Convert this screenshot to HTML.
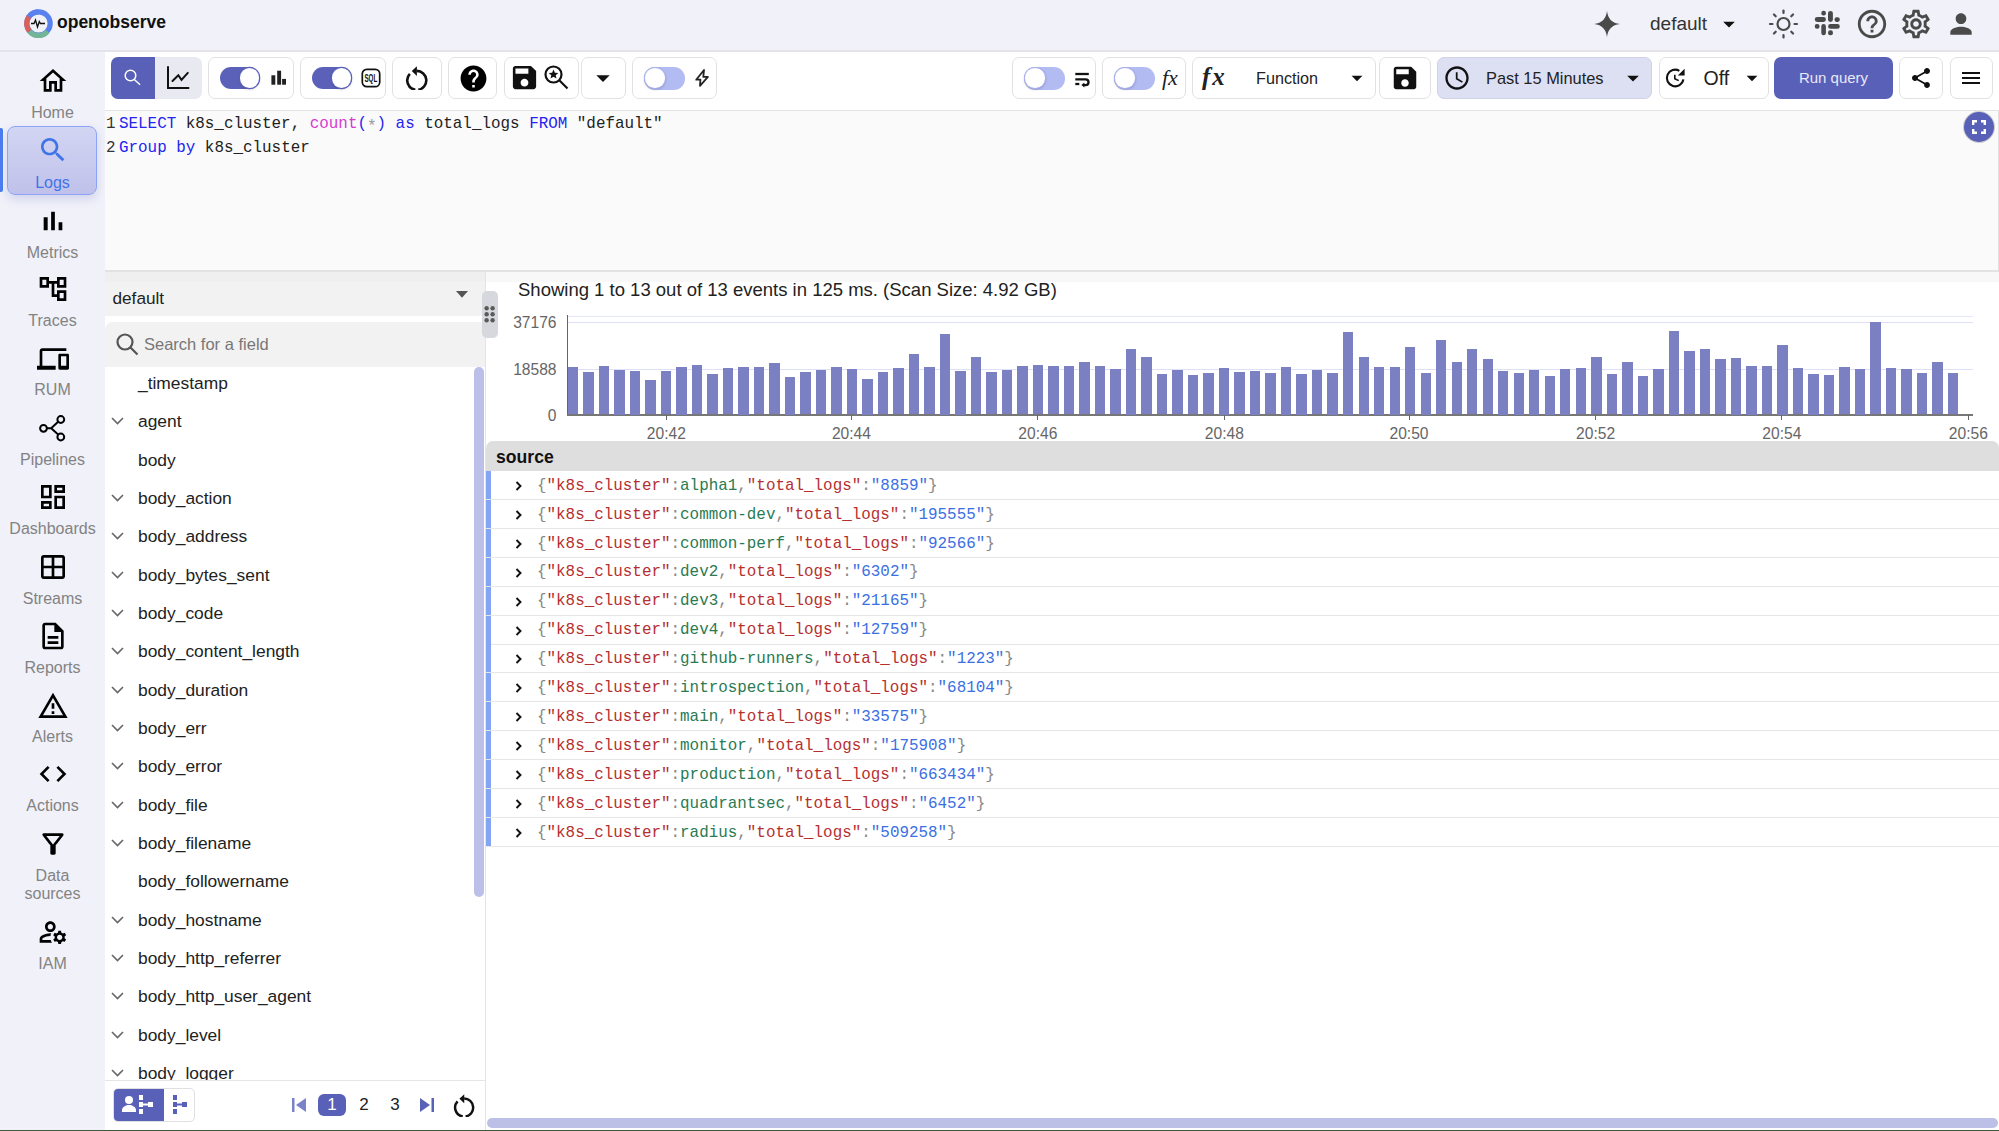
<!DOCTYPE html>
<html><head><meta charset="utf-8">
<style>
*{box-sizing:border-box;margin:0;padding:0}
html,body{width:1999px;height:1131px;overflow:hidden;background:#fff;font-family:"Liberation Sans",sans-serif;color:#222}
.a{position:absolute}
.nav{position:absolute;left:0;width:105px;text-align:center;font-size:16px;line-height:18px;color:#777}
.btn{position:absolute;top:57px;height:42px;border:1px solid #e2e2e2;border-radius:7px;background:#fff}
.mono{font-family:"Liberation Mono",monospace}
.fld{position:absolute;left:138px;font-size:17.4px;line-height:20px;color:#222;white-space:nowrap}
.row{position:absolute;left:486px;width:1513px;height:29px;border-bottom:1px solid #e6e6e6}
.bl{position:absolute;left:0;top:0;width:5px;height:28px;background:#84a4f4}
.rt{position:absolute;left:51px;top:4.8px;font-size:15.9px;line-height:20px;white-space:pre;color:#888}
.k{color:#b62f2f}.v{color:#2a7a52}.n{color:#3b6fe3}
.tick{position:absolute;top:415px;width:1px;height:5px;background:#666}
.xl{position:absolute;top:425px;font-size:15.6px;letter-spacing:0px;color:#666;width:60px;text-align:center;line-height:17px}
</style></head>
<body>

<div class="a" style="left:0;top:0;width:1999px;height:51px;background:#f0f1f9"></div>
<div class="a" style="left:0;top:51px;width:105px;height:1080px;background:#f0f1f9"></div>
<svg class="a" style="left:24px;top:9px" width="29" height="29" viewBox="0 0 29 29">
<circle cx="14.5" cy="14.5" r="11.7" fill="none" stroke="#5a82ee" stroke-width="5.2"/>
<path d="M14.5 2.8 A11.7 11.7 0 0 0 4.6 8.2" fill="none" stroke="#5a82ee" stroke-width="5.2"/>
<path d="M4.9 7.8 A11.7 11.7 0 0 0 5.5 22.3" fill="none" stroke="#d9605c" stroke-width="5.2"/>
<path d="M5.5 22.3 A11.7 11.7 0 0 0 23.5 22.3" fill="none" stroke="#73b596" stroke-width="5.2"/>
<path d="M7 14.5h3l1.5-3.5 2 7 1.8-5.5 1.2 2h4.5" fill="none" stroke="#111" stroke-width="1.3"/>
</svg>
<div class="a" style="left:57px;top:12px;font-size:17.5px;font-weight:bold;color:#111;letter-spacing:0px;line-height:20px">openobserve</div>
<svg class="a" style="left:1594px;top:11px" width="26" height="26" viewBox="0 0 26 26"><path fill="#4a4a4a" d="M13 0 C14 8 18 12 26 13 C18 14 14 18 13 26 C12 18 8 14 0 13 C8 12 12 8 13 0Z"/></svg>
<div class="a" style="left:1650px;top:14px;font-size:19px;color:#333;line-height:20px">default</div>
<svg class="a" style="left:1715px;top:10px" width="28" height="28" viewBox="0 0 24 24" ><path fill="#111" d="M7 10l5 5 5-5z"/></svg>
<svg class="a" style="left:1768px;top:9px" width="31" height="31" viewBox="0 0 31 31"><g stroke="#4a4a4a" stroke-width="2.2" fill="none" stroke-linecap="round"><circle cx="15.5" cy="15" r="6"/><line x1="26.50" y1="15.00" x2="29.00" y2="15.00"/><line x1="23.28" y1="22.78" x2="25.05" y2="24.55"/><line x1="15.50" y1="26.00" x2="15.50" y2="28.50"/><line x1="7.72" y1="22.78" x2="5.95" y2="24.55"/><line x1="4.50" y1="15.00" x2="2.00" y2="15.00"/><line x1="7.72" y1="7.22" x2="5.95" y2="5.45"/><line x1="15.50" y1="4.00" x2="15.50" y2="1.50"/><line x1="23.28" y1="7.22" x2="25.05" y2="5.45"/></g></svg>
<svg class="a" style="left:1810px;top:6px" width="36" height="36" viewBox="0 0 36 36"><g fill="#4a4a4a">
<rect x="11.3" y="4.8" width="4.6" height="4.7" rx="2.1"/><rect x="18" y="4.9" width="4.9" height="11" rx="2.45"/>
<rect x="4.8" y="11.1" width="11.1" height="4.8" rx="2.4"/><rect x="24.5" y="11.3" width="5.3" height="4.6" rx="2.1"/>
<rect x="4.8" y="18" width="4.7" height="4.8" rx="2.1"/><rect x="11.3" y="18.1" width="4.6" height="11.2" rx="2.3"/>
<rect x="18.1" y="18.1" width="11.7" height="4.7" rx="2.35"/><rect x="18.1" y="24.3" width="4.8" height="5" rx="2.1"/>
</g></svg>
<svg class="a" style="left:1855px;top:7px" width="34" height="34" viewBox="0 0 24 24" ><path fill="#4a4a4a" d="M11 18h2v-2h-2v2zm1-16C6.48 2 2 6.48 2 12s4.48 10 10 10 10-4.48 10-10S17.52 2 12 2zm0 18c-4.41 0-8-3.59-8-8s3.59-8 8-8 8 3.59 8 8-3.59 8-8 8zm0-14c-2.21 0-4 1.79-4 4h2c0-1.1.9-2 2-2s2 .9 2 2c0 2-3 1.75-3 5h2c0-2.25 3-2.5 3-5 0-2.21-1.79-4-4-4z"/></svg>
<svg class="a" style="left:1899px;top:7px" width="34" height="34" viewBox="0 0 24 24" ><path fill="#4a4a4a" d="M19.43 12.98c.04-.32.07-.64.07-.98 0-.34-.03-.66-.07-.98l2.11-1.65c.19-.15.24-.42.12-.64l-2-3.46c-.09-.16-.26-.25-.44-.25-.06 0-.12.01-.17.03l-2.49 1c-.52-.4-1.08-.73-1.69-.98l-.38-2.65C14.46 2.18 14.25 2 14 2h-4c-.25 0-.46.18-.49.42l-.38 2.65c-.61.25-1.17.59-1.69.98l-2.49-1c-.06-.02-.12-.03-.18-.03-.17 0-.34.09-.43.25l-2 3.46c-.13.22-.07.49.12.64l2.11 1.65c-.04.32-.07.65-.07.98 0 .33.03.66.07.98l-2.11 1.65c-.19.15-.24.42-.12.64l2 3.46c.09.16.26.25.44.25.06 0 .12-.01.17-.03l2.49-1c.52.4 1.08.73 1.69.98l.38 2.65c.03.24.24.42.49.42h4c.25 0 .46-.18.49-.42l.38-2.65c.61-.25 1.17-.59 1.69-.98l2.49 1c.06.02.12.03.18.03.17 0 .34-.09.43-.25l2-3.46c.12-.22.07-.49-.12-.64l-2.11-1.65zm-1.98-1.71c.04.31.05.52.05.73 0 .21-.02.43-.05.73l-.14 1.13.89.7 1.08.84-.7 1.21-1.27-.51-1.04-.42-.9.68c-.43.32-.84.56-1.25.73l-1.06.43-.16 1.13-.2 1.35h-1.4l-.19-1.35-.16-1.13-1.06-.43c-.43-.18-.83-.41-1.23-.71l-.91-.7-1.06.43-1.27.51-.7-1.21 1.08-.84.89-.7-.14-1.13c-.03-.31-.05-.54-.05-.74s.02-.43.05-.73l.14-1.13-.89-.7-1.08-.84.7-1.21 1.27.51 1.04.42.9-.68c.43-.32.84-.56 1.25-.73l1.06-.43.16-1.13.2-1.35h1.39l.19 1.35.16 1.13 1.06.43c.43.18.83.41 1.23.71l.91.7 1.06-.43 1.27-.51.7 1.21-1.07.85-.89.7.14 1.13zM12 8c-2.21 0-4 1.79-4 4s1.79 4 4 4 4-1.79 4-4-1.79-4-4-4zm0 6c-1.1 0-2-.9-2-2s.9-2 2-2 2 .9 2 2-.9 2-2 2z"/></svg>
<svg class="a" style="left:1945px;top:8px" width="32" height="32" viewBox="0 0 24 24" ><path fill="#4a4a4a" d="M12 12c2.21 0 4-1.79 4-4s-1.79-4-4-4-4 1.79-4 4 1.79 4 4 4zm0 2c-2.67 0-8 1.34-8 4v2h16v-2c0-2.66-5.33-4-8-4z"/></svg>
<div class="a" style="left:7px;top:126px;width:90px;height:69px;border-radius:8px;background:linear-gradient(#d3d5f3,#bfc1ea);border:1px solid #8aa5f5;box-shadow:0 4px 10px rgba(120,120,200,0.25)"></div>
<div class="a" style="left:0;top:128px;width:3px;height:64px;background:#4a7cf0;border-radius:0 2px 2px 0"></div>
<svg class="a" style="left:36.5px;top:65px" width="32" height="32" viewBox="0 0 24 24" ><path fill="#000" d="M12 5.69l5 4.5V18h-2v-6H9v6H7v-7.81l5-4.5M12 3L2 12h3v8h6v-6h2v6h6v-8h3L12 3z"/></svg>
<div class="nav" style="top:103.5px;color:#838383">Home</div>
<svg class="a" style="left:36.5px;top:134px" width="32" height="32" viewBox="0 0 24 24" ><path fill="#3f74e8" d="M15.5 14h-.79l-.28-.27C15.41 12.59 16 11.11 16 9.5 16 5.91 13.09 3 9.5 3S3 5.91 3 9.5 5.91 16 9.5 16c1.61 0 3.09-.59 4.23-1.57l.27.28v.79l5 4.99L20.49 19l-4.99-5zm-6 0C7.01 14 5 11.99 5 9.5S7.01 5 9.5 5 14 7.01 14 9.5 11.99 14 9.5 14z"/></svg>
<div class="nav" style="top:173.5px;color:#3f74e8">Logs</div>
<svg class="a" style="left:36.5px;top:205px" width="32" height="32" viewBox="0 0 24 24" ><path fill="#000" d="M5 9.2h3V19H5zM10.6 5h2.8v14h-2.8zm5.6 8H19v6h-2.8z"/></svg>
<div class="nav" style="top:243.5px;color:#838383">Metrics</div>
<svg class="a" style="left:36.5px;top:273px" width="32" height="32" viewBox="0 0 24 24" ><path fill="#000" d="M22 11V3h-7v3H9V3H2v8h7V8h2v10h4v3h7v-8h-7v3h-2V8h2v3h7zM7 9H4V5h3v4zm10 6h3v4h-3v-4zm0-10h3v4h-3V5z"/></svg>
<div class="nav" style="top:311.5px;color:#838383">Traces</div>
<svg class="a" style="left:36.5px;top:343px" width="32" height="32" viewBox="0 0 24 24" ><path fill="#000" d="M4 6h18V4H4c-1.1 0-2 .9-2 2v11H0v3h14v-3H4V6zm19 2h-6c-.55 0-1 .45-1 1v10c0 .55.45 1 1 1h6c.55 0 1-.45 1-1V9c0-.55-.45-1-1-1zm-1 9h-4v-7h4v7z"/></svg>
<div class="nav" style="top:380.5px;color:#838383">RUM</div>
<svg class="a" style="left:37px;top:412px" width="32" height="32" viewBox="0 0 32 32"><g stroke="#000" stroke-width="2" fill="none"><circle cx="6.5" cy="16.3" r="3.4"/><circle cx="23.8" cy="7.5" r="3.4"/><circle cx="23.8" cy="25" r="3.4"/><path d="M9.9 16.3H14.2L21.4 9.6M14.2 16.3L21.4 22.7"/></g></svg>
<div class="nav" style="top:450.5px;color:#838383">Pipelines</div>
<svg class="a" style="left:36.5px;top:481px" width="32" height="32" viewBox="0 0 24 24" ><path fill="#000" d="M19 5v2h-4V5h4M9 5v6H5V5h4m10 8v6h-4v-6h4M9 17v2H5v-2h4M21 3h-8v6h8V3zM11 3H3v10h8V3zm10 8h-8v10h8V11zm-10 4H3v6h8v-6z"/></svg>
<div class="nav" style="top:519.5px;color:#838383">Dashboards</div>
<svg class="a" style="left:36.5px;top:551px" width="32" height="32" viewBox="0 0 24 24" ><path fill="#000" d="M19 3H5c-1.1 0-2 .9-2 2v14c0 1.1.9 2 2 2h14c1.1 0 2-.9 2-2V5c0-1.1-.9-2-2-2zm0 2v6h-6V5h6zm-8 0v6H5V5h6zm-6 14v-6h6v6H5zm8 0v-6h6v6h-6z"/></svg>
<div class="nav" style="top:589.5px;color:#838383">Streams</div>
<svg class="a" style="left:36.5px;top:620px" width="32" height="32" viewBox="0 0 24 24" ><path fill="#000" d="M8 16h8v2H8zm0-4h8v2H8zm6-10H6c-1.1 0-2 .9-2 2v16c0 1.1.89 2 1.99 2H18c1.1 0 2-.9 2-2V8l-6-6zm4 18H6V4h7v5h5v11z"/></svg>
<div class="nav" style="top:658.5px;color:#838383">Reports</div>
<svg class="a" style="left:36.5px;top:690px" width="32" height="32" viewBox="0 0 24 24" ><path fill="#000" d="M12 5.99L19.53 19H4.47L12 5.99M12 2L1 21h22L12 2zm1 14h-2v2h2v-2zm0-6h-2v4h2v-4z"/></svg>
<div class="nav" style="top:727.5px;color:#838383">Alerts</div>
<svg class="a" style="left:36.5px;top:758px" width="32" height="32" viewBox="0 0 24 24" ><path fill="#000" d="M9.4 16.6L4.8 12l4.6-4.6L8 6l-6 6 6 6 1.4-1.4zm5.2 0l4.6-4.6-4.6-4.6L16 6l6 6-6 6-1.4-1.4z"/></svg>
<div class="nav" style="top:796.5px;color:#838383">Actions</div>
<svg class="a" style="left:36.5px;top:828px" width="32" height="32" viewBox="0 0 24 24" ><path fill="#000" d="M7 6h10l-5.01 6.3L7 6zm-2.75-.39C6.27 8.2 10 13 10 13v6c0 .55.45 1 1 1h2c.55 0 1-.45 1-1v-6s3.72-4.8 5.74-7.39c.51-.66.04-1.61-.79-1.61H5.04c-.83 0-1.3.95-.79 1.61z"/></svg>
<div class="nav" style="top:866.5px;color:#838383">Data<br>sources</div>
<svg class="a" style="left:36.5px;top:916px" width="32" height="32" viewBox="0 0 24 24" ><path fill="#000" d="M4 18v-.65c0-.34.16-.66.41-.81C6.1 15.53 8.03 15 10 15c.03 0 .05 0 .08.01.1-.7.3-1.37.59-1.98-.22-.02-.44-.03-.67-.03-2.42 0-4.68.67-6.61 1.82-.88.52-1.39 1.5-1.39 2.53V20h9.26c-.42-.6-.75-1.28-.97-2H4zM10 12c2.21 0 4-1.79 4-4s-1.79-4-4-4-4 1.79-4 4 1.79 4 4 4zm0-6c1.1 0 2 .9 2 2s-.9 2-2 2-2-.9-2-2 .9-2 2-2zm10.75 10c0-.22-.03-.42-.06-.63l1.14-1.01-1-1.73-1.45.49c-.32-.27-.68-.48-1.08-.63L18 11h-2l-.3 1.49c-.4.15-.76.36-1.08.63l-1.45-.49-1 1.73 1.14 1.01c-.03.21-.06.41-.06.63s.03.42.06.63l-1.14 1.01 1 1.73 1.45-.49c.32.27.68.48 1.08.63L16 21h2l.3-1.49c.4-.15.76-.36 1.08-.63l1.45.49 1-1.73-1.14-1.01c.03-.21.06-.41.06-.63zM17 18c-1.1 0-2-.9-2-2s.9-2 2-2 2 .9 2 2-.9 2-2 2z"/></svg>
<div class="nav" style="top:954.5px;color:#838383">IAM</div>
<div class="a" style="left:105px;top:52px;width:1894px;height:59px;background:#fff;border-bottom:1px solid #e4e4e4"></div>
<div class="a" style="left:0;top:50px;width:1999px;height:2px;background:#e3e3e8"></div>
<div class="a" style="left:111px;top:57px;width:91px;height:42px;border-radius:7px;background:#e9e9f2;overflow:hidden"><div class="a" style="left:0;top:0;width:44px;height:42px;background:#5960b8"></div></div>
<svg class="a" style="left:120px;top:65px" width="26" height="26" viewBox="0 0 26 26"><g fill="none" stroke="#fff" stroke-width="1.5"><circle cx="10.5" cy="10.5" r="5.3"/><path d="M14.3 14.5l5.8 5.3"/></g></svg>
<svg class="a" style="left:165px;top:65px" width="26" height="26" viewBox="0 0 26 26"><g fill="none" stroke="#111" stroke-width="2" stroke-linecap="round"><path d="M3 2v21h20.5"/><path d="M7.5 16l5.8-5.8 3.2 4.7 6.3-7"/></g></svg>
<div class="btn" style="left:208px;width:86px"></div>
<div class="a" style="left:220px;top:67px;width:40px;height:22px;border-radius:11px;background:#5b61b9"></div><div class="a" style="left:239.5px;top:68.2px;width:19.6px;height:19.6px;border-radius:50%;background:#fff;box-shadow:0 0 0 1.2px #5b61b9,0 1px 3px rgba(0,0,0,.3)"></div>
<svg class="a" style="left:271px;top:70px" width="16" height="15" viewBox="0 0 16 15"><g fill="#222"><rect x="0.4" y="5.3" width="3.9" height="9.4"/><rect x="6.2" y="0.7" width="3.9" height="14"/><rect x="11.1" y="8.9" width="3.9" height="5.8"/></g></svg>
<div class="btn" style="left:300px;width:86px"></div>
<div class="a" style="left:312px;top:67px;width:40px;height:22px;border-radius:11px;background:#5b61b9"></div><div class="a" style="left:331.5px;top:68.2px;width:19.6px;height:19.6px;border-radius:50%;background:#fff;box-shadow:0 0 0 1.2px #5b61b9,0 1px 3px rgba(0,0,0,.3)"></div>
<svg class="a" style="left:361px;top:68px" width="20" height="20" viewBox="0 0 20 20"><rect x="1.3" y="1.3" width="17.4" height="17.4" rx="4.5" fill="none" stroke="#111" stroke-width="1.7"/><text x="3.4" y="14.2" font-family="Liberation Sans" font-weight="bold" font-size="10" textLength="12.8" lengthAdjust="spacingAndGlyphs" fill="#111">SQL</text></svg>
<div class="btn" style="left:392px;width:50px"></div>
<svg class="a" style="left:404px;top:64px" width="26.0" height="26.0" viewBox="0 0 26 26"><g fill="none" stroke="#111" stroke-width="2.6"><path d="M14.29 25.78A9.5 9.5 0 0 0 12.8 6.9"/><path d="M11.31 25.78A9.5 9.5 0 0 1 5.85 9.92"/></g><path d="M7.8 7.1L12.9 2.3V11.9Z" fill="#111"/></svg>
<div class="btn" style="left:448px;width:49px"></div>
<svg class="a" style="left:457.5px;top:63px" width="31" height="31" viewBox="0 0 24 24" ><path fill="#000" d="M12 2C6.48 2 2 6.48 2 12s4.48 10 10 10 10-4.48 10-10S17.52 2 12 2zm1 17h-2v-2h2v2zm2.07-7.75l-.9.92C13.45 12.9 13 13.5 13 15h-2v-.5c0-1.1.45-2.1 1.17-2.83l1.24-1.26c.37-.36.59-.86.59-1.41 0-1.1-.9-2-2-2s-2 .9-2 2H8c0-2.21 1.79-4 4-4s4 1.79 4 4c0 .88-.36 1.68-.93 2.25z"/></svg>
<div class="btn" style="left:504px;width:75px"></div>
<svg class="a" style="left:509px;top:62px" width="31" height="31" viewBox="0 0 24 24" ><path fill="#111" d="M17 3H5c-1.11 0-2 .9-2 2v14c0 1.1.89 2 2 2h14c1.1 0 2-.9 2-2V7l-4-4zm-5 16c-1.66 0-3-1.34-3-3s1.34-3 3-3 3 1.34 3 3-1.34 3-3 3zm3-10H5V5h10v4z"/></svg>
<svg class="a" style="left:543px;top:64px" width="27" height="27" viewBox="0 0 27 27"><g fill="none" stroke="#111" stroke-width="2.2"><circle cx="10.5" cy="10.5" r="8"/><path d="M16.5 16.5l8 8"/></g><path fill="#111" d="M10.5 5.5l1.4 3.2 3.4.3-2.6 2.2.8 3.3-3-1.8-3 1.8.8-3.3-2.6-2.2 3.4-.3z"/></svg>
<div class="btn" style="left:581px;width:45px"></div>
<svg class="a" style="left:587px;top:62px" width="32" height="32" viewBox="0 0 24 24" ><path fill="#111" d="M7 10l5 5 5-5z"/></svg>
<div class="btn" style="left:632px;width:85px"></div>
<div class="a" style="left:644px;top:67px;width:40.5px;height:22.5px;border-radius:11.25px;background:#b3bbf3"></div><div class="a" style="left:645.2px;top:68.4px;width:19.6px;height:19.6px;border-radius:50%;background:#fff;box-shadow:0 0 0 1px #a9b0ec,0 1px 3px rgba(0,0,0,.35)"></div>
<svg class="a" style="left:692px;top:66px" width="20" height="24" viewBox="0 0 20 24"><path d="M12 4 L11.3 10.9 H15.9 L8 19.8 L8.4 13.7 H4.2 Z" fill="none" stroke="#222" stroke-width="1.8" stroke-linejoin="round"/></svg>
<div class="btn" style="left:1012px;width:84px"></div>
<div class="a" style="left:1024px;top:67px;width:40.5px;height:22.5px;border-radius:11.25px;background:#b3bbf3"></div><div class="a" style="left:1025.2px;top:68.4px;width:19.6px;height:19.6px;border-radius:50%;background:#fff;box-shadow:0 0 0 1px #a9b0ec,0 1px 3px rgba(0,0,0,.35)"></div>
<svg class="a" style="left:1072px;top:68px" width="20" height="20" viewBox="0 0 20 20"><g fill="none" stroke="#111" stroke-width="2.3"><path d="M3.3 6H16.8"/><path d="M3.3 11.3H13.6a2.9 2.9 0 0 1 0 5.8H11.8"/><path d="M3.3 16H7.3"/></g><path fill="#111" d="M12.4 14.6V19.6L9.3 17.1Z"/></svg>
<div class="btn" style="left:1102px;width:84px"></div>
<div class="a" style="left:1114px;top:67px;width:40.5px;height:22.5px;border-radius:11.25px;background:#b3bbf3"></div><div class="a" style="left:1115.2px;top:68.4px;width:19.6px;height:19.6px;border-radius:50%;background:#fff;box-shadow:0 0 0 1px #a9b0ec,0 1px 3px rgba(0,0,0,.35)"></div>
<div class="a" style="left:1162px;top:63px;font-family:'Liberation Serif',serif;font-style:italic;font-size:22px;color:#222;line-height:30px">fx</div>
<div class="btn" style="left:1192px;width:184px"></div>
<div class="a" style="left:1202px;top:60px;font-family:'Liberation Serif',serif;font-style:italic;font-weight:bold;font-size:25px;letter-spacing:2px;color:#222;line-height:34px">fx</div>
<div class="a" style="left:1256px;top:68px;font-size:16.2px;color:#222;line-height:20px">Function</div>
<svg class="a" style="left:1344px;top:65px" width="26" height="26" viewBox="0 0 24 24" ><path fill="#111" d="M7 10l5 5 5-5z"/></svg>
<div class="btn" style="left:1379px;width:52px"></div>
<svg class="a" style="left:1390px;top:63px" width="30" height="30" viewBox="0 0 24 24" ><path fill="#111" d="M17 3H5c-1.11 0-2 .9-2 2v14c0 1.1.89 2 2 2h14c1.1 0 2-.9 2-2V7l-4-4zm-5 16c-1.66 0-3-1.34-3-3s1.34-3 3-3 3 1.34 3 3-1.34 3-3 3zm3-10H5V5h10v4z"/></svg>
<div class="a" style="left:1437px;top:57px;width:215px;height:42px;border-radius:7px;background:#dddff2;border:1px solid #d0d2e6"></div>
<svg class="a" style="left:1443px;top:64px" width="28" height="28" viewBox="0 0 24 24" ><path fill="#111" d="M11.99 2C6.47 2 2 6.48 2 12s4.47 10 9.99 10C17.52 22 22 17.52 22 12S17.52 2 11.99 2zM12 20c-4.42 0-8-3.58-8-8s3.58-8 8-8 8 3.58 8 8-3.58 8-8 8zm.5-13H11v6l5.25 3.15.75-1.23-4.5-2.67z"/></svg>
<div class="a" style="left:1486px;top:68px;font-size:16.4px;color:#222;line-height:20px">Past 15 Minutes</div>
<svg class="a" style="left:1619px;top:64px" width="28" height="28" viewBox="0 0 24 24" ><path fill="#111" d="M7 10l5 5 5-5z"/></svg>
<div class="btn" style="left:1659px;width:110px"></div>
<svg class="a" style="left:1664px;top:67px" width="24" height="24" viewBox="0 0 24 24"><g fill="none" stroke="#111"><path d="M19.37 12.44A8.3 8.3 0 1 1 15.35 3.81" stroke-width="2.1"/><path d="M10.8 7.8V11.7L14.7 13.6" stroke-width="1.6"/></g><path d="M20.6 1.8V8.6H13.8Z" fill="#111"/></svg>
<div class="a" style="left:1703.5px;top:67.5px;font-size:19.5px;color:#222;line-height:20px">Off</div>
<svg class="a" style="left:1739px;top:65px" width="26" height="26" viewBox="0 0 24 24" ><path fill="#111" d="M7 10l5 5 5-5z"/></svg>
<div class="a" style="left:1774px;top:57px;width:119px;height:42px;border-radius:7px;background:#5960b8"></div>
<div class="a" style="left:1774px;top:68px;width:119px;text-align:center;font-size:15px;color:#e8e8f8;line-height:20px">Run query</div>
<div class="btn" style="left:1899px;width:44px"></div>
<svg class="a" style="left:1909px;top:66.2px" width="24" height="24" viewBox="0 0 24 24" ><path fill="#111" d="M18 16.08c-.76 0-1.44.3-1.96.77L8.91 12.7c.05-.23.09-.46.09-.7s-.04-.47-.09-.7l7.05-4.11c.54.5 1.25.81 2.04.81 1.66 0 3-1.34 3-3s-1.34-3-3-3-3 1.34-3 3c0 .24.04.47.09.7L8.04 9.81C7.5 9.31 6.79 9 6 9c-1.66 0-3 1.34-3 3s1.34 3 3 3c.79 0 1.5-.31 2.04-.81l7.12 4.16c-.05.21-.08.43-.08.65 0 1.61 1.31 2.92 2.92 2.92 1.61 0 2.92-1.31 2.92-2.92s-1.31-2.92-2.92-2.92z"/></svg>
<div class="btn" style="left:1950px;width:43px"></div>
<svg class="a" style="left:1959.4px;top:66.2px" width="24" height="24" viewBox="0 0 24 24" ><path fill="#111" d="M3 18h18v-2H3v2zm0-5h18v-2H3v2zm0-7v2h18V6H3z"/></svg>
<div class="a" style="left:105px;top:111px;width:1894px;height:159px;background:#fafafa"></div>
<div class="a mono" style="left:106px;top:113px;font-size:15.9px;line-height:23.5px;white-space:pre;color:#333">1
2</div>
<div class="a mono" style="left:119px;top:113px;font-size:15.9px;line-height:23.5px;white-space:pre;color:#222"><span style="color:#2424f0">SELECT</span> k8s_cluster, <span style="color:#d53bd0">count</span><span style="color:#2424f0">(</span><span style="color:#999;position:relative;top:3px">*</span><span style="color:#2424f0">)</span> <span style="color:#2424f0">as</span> total_logs <span style="color:#2424f0">FROM</span> "default"
<span style="color:#2424f0">Group</span> <span style="color:#2424f0">by</span> k8s_cluster</div>
<div class="a" style="left:1998px;top:111px;width:1px;height:159px;background:#e0e0e0"></div>
<div class="a" style="left:1964px;top:111.7px;width:30px;height:30px;border-radius:50%;background:#5960b8;box-shadow:0 0 0 1px rgba(120,120,120,0.35)"></div>
<svg class="a" style="left:1972px;top:120px" width="14" height="14" viewBox="0 0 14 14"><g fill="none" stroke="#fff" stroke-width="2.4"><path d="M1.2 5V1.2H5M9 1.2h3.8V5M12.8 9v3.8H9M5 12.8H1.2V9"/></g></svg>
<div class="a" style="left:105px;top:270px;width:1894px;height:2px;background:#e2e2e2"></div>
<div class="a" style="left:105px;top:272px;width:380px;height:44px;background:#f2f2f2"></div>
<div class="a" style="left:105px;top:272px;width:380px;height:10px;background:#efeff0"></div>
<div class="a" style="left:112.5px;top:288px;font-size:17.2px;color:#222;line-height:20px">default</div>
<svg class="a" style="left:456px;top:291.3px" width="12" height="7" viewBox="0 0 12 7"><path d="M0 0h12L6 6.7z" fill="#555"/></svg>
<div class="a" style="left:105px;top:322px;width:380px;height:45px;background:#f2f2f2;border-radius:8px 0 0 0"></div>
<svg class="a" style="left:115px;top:332px" width="25" height="25" viewBox="0 0 25 25"><g fill="none" stroke="#555" stroke-width="2.2"><circle cx="10" cy="10" r="7.5"/><path d="M15.5 15.5l7 7"/></g></svg>
<div class="a" style="left:144px;top:334px;font-size:16.5px;color:#777;line-height:20px">Search for a field</div>
<div class="fld" style="top:373.0px">_timestamp</div>
<div class="fld" style="top:411.3px">agent</div>
<svg class="a" style="left:111px;top:417.3px" width="13" height="8" viewBox="0 0 13 8"><path d="M1 1l5.5 5.5L12 1" fill="none" stroke="#666" stroke-width="1.6"/></svg>
<div class="fld" style="top:449.7px">body</div>
<div class="fld" style="top:488.0px">body_action</div>
<svg class="a" style="left:111px;top:494.0px" width="13" height="8" viewBox="0 0 13 8"><path d="M1 1l5.5 5.5L12 1" fill="none" stroke="#666" stroke-width="1.6"/></svg>
<div class="fld" style="top:526.3px">body_address</div>
<svg class="a" style="left:111px;top:532.3px" width="13" height="8" viewBox="0 0 13 8"><path d="M1 1l5.5 5.5L12 1" fill="none" stroke="#666" stroke-width="1.6"/></svg>
<div class="fld" style="top:564.6px">body_bytes_sent</div>
<svg class="a" style="left:111px;top:570.6px" width="13" height="8" viewBox="0 0 13 8"><path d="M1 1l5.5 5.5L12 1" fill="none" stroke="#666" stroke-width="1.6"/></svg>
<div class="fld" style="top:603.0px">body_code</div>
<svg class="a" style="left:111px;top:609.0px" width="13" height="8" viewBox="0 0 13 8"><path d="M1 1l5.5 5.5L12 1" fill="none" stroke="#666" stroke-width="1.6"/></svg>
<div class="fld" style="top:641.3px">body_content_length</div>
<svg class="a" style="left:111px;top:647.3px" width="13" height="8" viewBox="0 0 13 8"><path d="M1 1l5.5 5.5L12 1" fill="none" stroke="#666" stroke-width="1.6"/></svg>
<div class="fld" style="top:679.6px">body_duration</div>
<svg class="a" style="left:111px;top:685.6px" width="13" height="8" viewBox="0 0 13 8"><path d="M1 1l5.5 5.5L12 1" fill="none" stroke="#666" stroke-width="1.6"/></svg>
<div class="fld" style="top:718.0px">body_err</div>
<svg class="a" style="left:111px;top:724.0px" width="13" height="8" viewBox="0 0 13 8"><path d="M1 1l5.5 5.5L12 1" fill="none" stroke="#666" stroke-width="1.6"/></svg>
<div class="fld" style="top:756.3px">body_error</div>
<svg class="a" style="left:111px;top:762.3px" width="13" height="8" viewBox="0 0 13 8"><path d="M1 1l5.5 5.5L12 1" fill="none" stroke="#666" stroke-width="1.6"/></svg>
<div class="fld" style="top:794.6px">body_file</div>
<svg class="a" style="left:111px;top:800.6px" width="13" height="8" viewBox="0 0 13 8"><path d="M1 1l5.5 5.5L12 1" fill="none" stroke="#666" stroke-width="1.6"/></svg>
<div class="fld" style="top:833.0px">body_filename</div>
<svg class="a" style="left:111px;top:839.0px" width="13" height="8" viewBox="0 0 13 8"><path d="M1 1l5.5 5.5L12 1" fill="none" stroke="#666" stroke-width="1.6"/></svg>
<div class="fld" style="top:871.3px">body_followername</div>
<div class="fld" style="top:909.6px">body_hostname</div>
<svg class="a" style="left:111px;top:915.6px" width="13" height="8" viewBox="0 0 13 8"><path d="M1 1l5.5 5.5L12 1" fill="none" stroke="#666" stroke-width="1.6"/></svg>
<div class="fld" style="top:947.9px">body_http_referrer</div>
<svg class="a" style="left:111px;top:953.9px" width="13" height="8" viewBox="0 0 13 8"><path d="M1 1l5.5 5.5L12 1" fill="none" stroke="#666" stroke-width="1.6"/></svg>
<div class="fld" style="top:986.3px">body_http_user_agent</div>
<svg class="a" style="left:111px;top:992.3px" width="13" height="8" viewBox="0 0 13 8"><path d="M1 1l5.5 5.5L12 1" fill="none" stroke="#666" stroke-width="1.6"/></svg>
<div class="fld" style="top:1024.6px">body_level</div>
<svg class="a" style="left:111px;top:1030.6px" width="13" height="8" viewBox="0 0 13 8"><path d="M1 1l5.5 5.5L12 1" fill="none" stroke="#666" stroke-width="1.6"/></svg>
<div class="fld" style="top:1062.9px">body_logger</div>
<svg class="a" style="left:111px;top:1068.9px" width="13" height="8" viewBox="0 0 13 8"><path d="M1 1l5.5 5.5L12 1" fill="none" stroke="#666" stroke-width="1.6"/></svg>
<div class="a" style="left:474px;top:367px;width:10px;height:530px;border-radius:5px;background:#bcbfe8"></div>
<div class="a" style="left:485px;top:272px;width:1px;height:859px;background:#e4e4e4"></div>
<div class="a" style="left:105px;top:1080px;width:380px;height:51px;background:#fff;border-top:1px solid #e6e6e6"></div>
<div class="a" style="left:113px;top:1088px;width:82px;height:34px;border:1px solid #e0e0e0;border-radius:5px;background:#fff;overflow:hidden"><div class="a" style="left:0;top:0;width:50px;height:34px;background:#5960b8"></div></div>
<svg class="a" style="left:121px;top:1093px" width="36" height="24" viewBox="0 0 36 24"><g fill="#fff"><circle cx="8" cy="7" r="4"/><path d="M1 17c0-3 4-5 7-5s7 2 7 5v2H1z"/><rect x="18" y="2" width="4" height="5"/><rect x="18" y="9" width="4" height="5"/><rect x="18" y="16" width="4" height="5"/><rect x="22" y="10.5" width="6" height="2"/><rect x="27" y="9" width="5" height="5"/></g></svg>
<svg class="a" style="left:171px;top:1093px" width="20" height="24" viewBox="0 0 20 24"><g fill="#5960b8"><rect x="2" y="2" width="4" height="5"/><rect x="2" y="9" width="4" height="5"/><rect x="2" y="16" width="4" height="5"/><rect x="6" y="10.5" width="6" height="2"/><rect x="11" y="9" width="5" height="5"/></g></svg>
<svg class="a" style="left:290px;top:1096px" width="18" height="18" viewBox="0 0 18 18"><g fill="#7b82c9"><rect x="2" y="2" width="2.5" height="14"/><path d="M16 2v14L6 9z"/></g></svg>
<div class="a" style="left:318px;top:1094px;width:28px;height:22px;border-radius:6px;background:#5960b8;color:#fff;font-size:17px;line-height:22px;text-align:center">1</div>
<div class="a" style="left:355px;top:1095px;width:18px;font-size:17px;color:#222;line-height:20px;text-align:center">2</div>
<div class="a" style="left:386px;top:1095px;width:18px;font-size:17px;color:#222;line-height:20px;text-align:center">3</div>
<svg class="a" style="left:418px;top:1096px" width="18" height="18" viewBox="0 0 18 18"><g fill="#5960b8"><rect x="13.5" y="2" width="2.5" height="14"/><path d="M2 2v14L12 9z"/></g></svg>
<svg class="a" style="left:452px;top:1092px" width="24.7" height="24.7" viewBox="0 0 26 26"><g fill="none" stroke="#111" stroke-width="2.6"><path d="M14.29 25.78A9.5 9.5 0 0 0 12.8 6.9"/><path d="M11.31 25.78A9.5 9.5 0 0 1 5.85 9.92"/></g><path d="M7.8 7.1L12.9 2.3V11.9Z" fill="#111"/></svg>
<div class="a" style="left:482px;top:291px;width:16px;height:47px;border-radius:5px;background:#d5d8dc"></div>
<svg class="a" style="left:482px;top:301px" width="16" height="26" viewBox="0 0 16 26"><g fill="#5a5a5a"><circle cx="4.65" cy="7.3" r="2.2"/><circle cx="10.6" cy="7.3" r="2.2"/><circle cx="4.65" cy="13.3" r="2.2"/><circle cx="10.6" cy="13.3" r="2.2"/><circle cx="4.65" cy="19.2" r="2.2"/><circle cx="10.6" cy="19.2" r="2.2"/></g></svg>
<div class="a" style="left:486px;top:272px;width:1513px;height:10px;background:#f8f8f8"></div>
<div class="a" style="left:518px;top:280px;font-size:18.5px;color:#222;line-height:20px;white-space:nowrap">Showing 1 to 13 out of 13 events in 125 ms. (Scan Size: 4.92 GB)</div>
<div class="a" style="left:567px;top:315.5px;width:1406px;height:1px;background:#e4e7f8"></div>
<div class="a" style="left:567px;top:322px;width:1406px;height:1px;background:#dde0f6"></div>
<div class="a" style="left:567px;top:368.5px;width:1406px;height:1px;background:#dde0f6"></div>
<div class="a" style="left:566.5px;top:315px;width:1.2px;height:100px;background:#666"></div>
<div class="a" style="left:567px;top:414px;width:1406px;height:1.5px;background:#777"></div>
<div class="a" style="left:567.60px;top:366.8px;width:10.4px;height:47.7px;background:#7a80c2"></div>
<div class="a" style="left:583.11px;top:372.1px;width:10.4px;height:42.4px;background:#7a80c2"></div>
<div class="a" style="left:598.62px;top:365.8px;width:10.4px;height:48.7px;background:#7a80c2"></div>
<div class="a" style="left:614.12px;top:369.5px;width:10.4px;height:45.0px;background:#7a80c2"></div>
<div class="a" style="left:629.63px;top:371.0px;width:10.4px;height:43.5px;background:#7a80c2"></div>
<div class="a" style="left:645.14px;top:379.7px;width:10.4px;height:34.8px;background:#7a80c2"></div>
<div class="a" style="left:660.65px;top:371.2px;width:10.4px;height:43.3px;background:#7a80c2"></div>
<div class="a" style="left:676.16px;top:366.5px;width:10.4px;height:48.0px;background:#7a80c2"></div>
<div class="a" style="left:691.66px;top:365.3px;width:10.4px;height:49.2px;background:#7a80c2"></div>
<div class="a" style="left:707.17px;top:374.2px;width:10.4px;height:40.3px;background:#7a80c2"></div>
<div class="a" style="left:722.68px;top:368.2px;width:10.4px;height:46.3px;background:#7a80c2"></div>
<div class="a" style="left:738.19px;top:367.0px;width:10.4px;height:47.5px;background:#7a80c2"></div>
<div class="a" style="left:753.69px;top:366.8px;width:10.4px;height:47.7px;background:#7a80c2"></div>
<div class="a" style="left:769.20px;top:362.8px;width:10.4px;height:51.7px;background:#7a80c2"></div>
<div class="a" style="left:784.71px;top:377.0px;width:10.4px;height:37.5px;background:#7a80c2"></div>
<div class="a" style="left:800.22px;top:371.8px;width:10.4px;height:42.7px;background:#7a80c2"></div>
<div class="a" style="left:815.73px;top:369.8px;width:10.4px;height:44.7px;background:#7a80c2"></div>
<div class="a" style="left:831.23px;top:366.8px;width:10.4px;height:47.7px;background:#7a80c2"></div>
<div class="a" style="left:846.74px;top:369.2px;width:10.4px;height:45.3px;background:#7a80c2"></div>
<div class="a" style="left:862.25px;top:379.0px;width:10.4px;height:35.5px;background:#7a80c2"></div>
<div class="a" style="left:877.76px;top:372.1px;width:10.4px;height:42.4px;background:#7a80c2"></div>
<div class="a" style="left:893.27px;top:367.7px;width:10.4px;height:46.8px;background:#7a80c2"></div>
<div class="a" style="left:908.77px;top:354.1px;width:10.4px;height:60.4px;background:#7a80c2"></div>
<div class="a" style="left:924.28px;top:367.4px;width:10.4px;height:47.1px;background:#7a80c2"></div>
<div class="a" style="left:939.79px;top:334.0px;width:10.4px;height:80.5px;background:#7a80c2"></div>
<div class="a" style="left:955.30px;top:371.0px;width:10.4px;height:43.5px;background:#7a80c2"></div>
<div class="a" style="left:970.80px;top:356.8px;width:10.4px;height:57.7px;background:#7a80c2"></div>
<div class="a" style="left:986.31px;top:371.8px;width:10.4px;height:42.7px;background:#7a80c2"></div>
<div class="a" style="left:1001.82px;top:370.3px;width:10.4px;height:44.2px;background:#7a80c2"></div>
<div class="a" style="left:1017.33px;top:365.8px;width:10.4px;height:48.7px;background:#7a80c2"></div>
<div class="a" style="left:1032.84px;top:364.7px;width:10.4px;height:49.8px;background:#7a80c2"></div>
<div class="a" style="left:1048.34px;top:365.8px;width:10.4px;height:48.7px;background:#7a80c2"></div>
<div class="a" style="left:1063.85px;top:366.1px;width:10.4px;height:48.4px;background:#7a80c2"></div>
<div class="a" style="left:1079.36px;top:361.7px;width:10.4px;height:52.8px;background:#7a80c2"></div>
<div class="a" style="left:1094.87px;top:366.1px;width:10.4px;height:48.4px;background:#7a80c2"></div>
<div class="a" style="left:1110.38px;top:369.2px;width:10.4px;height:45.3px;background:#7a80c2"></div>
<div class="a" style="left:1125.88px;top:349.0px;width:10.4px;height:65.5px;background:#7a80c2"></div>
<div class="a" style="left:1141.39px;top:356.8px;width:10.4px;height:57.7px;background:#7a80c2"></div>
<div class="a" style="left:1156.90px;top:373.7px;width:10.4px;height:40.8px;background:#7a80c2"></div>
<div class="a" style="left:1172.41px;top:369.8px;width:10.4px;height:44.7px;background:#7a80c2"></div>
<div class="a" style="left:1187.91px;top:374.8px;width:10.4px;height:39.7px;background:#7a80c2"></div>
<div class="a" style="left:1203.42px;top:373.3px;width:10.4px;height:41.2px;background:#7a80c2"></div>
<div class="a" style="left:1218.93px;top:368.0px;width:10.4px;height:46.5px;background:#7a80c2"></div>
<div class="a" style="left:1234.44px;top:372.1px;width:10.4px;height:42.4px;background:#7a80c2"></div>
<div class="a" style="left:1249.95px;top:371.0px;width:10.4px;height:43.5px;background:#7a80c2"></div>
<div class="a" style="left:1265.45px;top:372.8px;width:10.4px;height:41.7px;background:#7a80c2"></div>
<div class="a" style="left:1280.96px;top:367.0px;width:10.4px;height:47.5px;background:#7a80c2"></div>
<div class="a" style="left:1296.47px;top:374.0px;width:10.4px;height:40.5px;background:#7a80c2"></div>
<div class="a" style="left:1311.98px;top:369.8px;width:10.4px;height:44.7px;background:#7a80c2"></div>
<div class="a" style="left:1327.49px;top:373.0px;width:10.4px;height:41.5px;background:#7a80c2"></div>
<div class="a" style="left:1342.99px;top:332.0px;width:10.4px;height:82.5px;background:#7a80c2"></div>
<div class="a" style="left:1358.50px;top:356.5px;width:10.4px;height:58.0px;background:#7a80c2"></div>
<div class="a" style="left:1374.01px;top:367.0px;width:10.4px;height:47.5px;background:#7a80c2"></div>
<div class="a" style="left:1389.52px;top:367.0px;width:10.4px;height:47.5px;background:#7a80c2"></div>
<div class="a" style="left:1405.02px;top:346.6px;width:10.4px;height:67.9px;background:#7a80c2"></div>
<div class="a" style="left:1420.53px;top:373.0px;width:10.4px;height:41.5px;background:#7a80c2"></div>
<div class="a" style="left:1436.04px;top:340.3px;width:10.4px;height:74.2px;background:#7a80c2"></div>
<div class="a" style="left:1451.55px;top:362.3px;width:10.4px;height:52.2px;background:#7a80c2"></div>
<div class="a" style="left:1467.06px;top:349.3px;width:10.4px;height:65.2px;background:#7a80c2"></div>
<div class="a" style="left:1482.56px;top:358.6px;width:10.4px;height:55.9px;background:#7a80c2"></div>
<div class="a" style="left:1498.07px;top:371.0px;width:10.4px;height:43.5px;background:#7a80c2"></div>
<div class="a" style="left:1513.58px;top:373.0px;width:10.4px;height:41.5px;background:#7a80c2"></div>
<div class="a" style="left:1529.09px;top:370.0px;width:10.4px;height:44.5px;background:#7a80c2"></div>
<div class="a" style="left:1544.60px;top:375.5px;width:10.4px;height:39.0px;background:#7a80c2"></div>
<div class="a" style="left:1560.10px;top:368.5px;width:10.4px;height:46.0px;background:#7a80c2"></div>
<div class="a" style="left:1575.61px;top:368.3px;width:10.4px;height:46.2px;background:#7a80c2"></div>
<div class="a" style="left:1591.12px;top:356.8px;width:10.4px;height:57.7px;background:#7a80c2"></div>
<div class="a" style="left:1606.63px;top:373.7px;width:10.4px;height:40.8px;background:#7a80c2"></div>
<div class="a" style="left:1622.13px;top:361.5px;width:10.4px;height:53.0px;background:#7a80c2"></div>
<div class="a" style="left:1637.64px;top:375.5px;width:10.4px;height:39.0px;background:#7a80c2"></div>
<div class="a" style="left:1653.15px;top:368.8px;width:10.4px;height:45.7px;background:#7a80c2"></div>
<div class="a" style="left:1668.66px;top:330.5px;width:10.4px;height:84.0px;background:#7a80c2"></div>
<div class="a" style="left:1684.17px;top:350.8px;width:10.4px;height:63.7px;background:#7a80c2"></div>
<div class="a" style="left:1699.67px;top:348.8px;width:10.4px;height:65.7px;background:#7a80c2"></div>
<div class="a" style="left:1715.18px;top:358.6px;width:10.4px;height:55.9px;background:#7a80c2"></div>
<div class="a" style="left:1730.69px;top:357.5px;width:10.4px;height:57.0px;background:#7a80c2"></div>
<div class="a" style="left:1746.20px;top:365.5px;width:10.4px;height:49.0px;background:#7a80c2"></div>
<div class="a" style="left:1761.71px;top:365.8px;width:10.4px;height:48.7px;background:#7a80c2"></div>
<div class="a" style="left:1777.21px;top:345.0px;width:10.4px;height:69.5px;background:#7a80c2"></div>
<div class="a" style="left:1792.72px;top:367.7px;width:10.4px;height:46.8px;background:#7a80c2"></div>
<div class="a" style="left:1808.23px;top:374.0px;width:10.4px;height:40.5px;background:#7a80c2"></div>
<div class="a" style="left:1823.74px;top:374.5px;width:10.4px;height:40.0px;background:#7a80c2"></div>
<div class="a" style="left:1839.24px;top:367.4px;width:10.4px;height:47.1px;background:#7a80c2"></div>
<div class="a" style="left:1854.75px;top:369.0px;width:10.4px;height:45.5px;background:#7a80c2"></div>
<div class="a" style="left:1870.26px;top:322.3px;width:10.4px;height:92.2px;background:#7a80c2"></div>
<div class="a" style="left:1885.77px;top:368.3px;width:10.4px;height:46.2px;background:#7a80c2"></div>
<div class="a" style="left:1901.28px;top:369.1px;width:10.4px;height:45.4px;background:#7a80c2"></div>
<div class="a" style="left:1916.78px;top:373.4px;width:10.4px;height:41.1px;background:#7a80c2"></div>
<div class="a" style="left:1932.29px;top:362.3px;width:10.4px;height:52.2px;background:#7a80c2"></div>
<div class="a" style="left:1947.80px;top:373.4px;width:10.4px;height:41.1px;background:#7a80c2"></div>
<div class="a" style="left:496px;top:313.7px;width:60.5px;text-align:right;font-size:15.6px;letter-spacing:0px;color:#666;line-height:17px">37176</div>
<div class="a" style="left:496px;top:360.7px;width:60.5px;text-align:right;font-size:15.6px;letter-spacing:0px;color:#666;line-height:17px">18588</div>
<div class="a" style="left:496px;top:406.7px;width:60.5px;text-align:right;font-size:15.6px;letter-spacing:0px;color:#666;line-height:17px">0</div>
<div class="tick" style="left:665.8px"></div>
<div class="xl" style="left:636.3px">20:42</div>
<div class="tick" style="left:850.9px"></div>
<div class="xl" style="left:821.4px">20:44</div>
<div class="tick" style="left:1037.3px"></div>
<div class="xl" style="left:1007.8px">20:46</div>
<div class="tick" style="left:1223.8px"></div>
<div class="xl" style="left:1194.3px">20:48</div>
<div class="tick" style="left:1408.5px"></div>
<div class="xl" style="left:1379.0px">20:50</div>
<div class="tick" style="left:1595.1px"></div>
<div class="xl" style="left:1565.6px">20:52</div>
<div class="tick" style="left:1781.3px"></div>
<div class="xl" style="left:1751.8px">20:54</div>
<div class="tick" style="left:1967.8px"></div>
<div class="xl" style="left:1938.3px">20:56</div>
<div class="a" style="left:486px;top:441px;width:1513px;height:30px;background:#dedede;border-radius:7px 7px 0 0"></div>
<div class="a" style="left:496px;top:447.3px;font-size:17.6px;font-weight:bold;color:#111;line-height:20px">source</div>
<div class="row" style="top:471.0px"><div class="bl"></div><svg class="a" style="left:29px;top:10px" width="8" height="10" viewBox="0 0 8 10"><path d="M1.5 1l4 4-4 4" fill="none" stroke="#111" stroke-width="1.9"/></svg><div class="rt mono">{<span class="k">"k8s_cluster"</span>:<span class="v">alpha1</span>,<span class="k">"total_logs"</span>:<span class="n">"8859"</span>}</div></div>
<div class="row" style="top:499.9px"><div class="bl"></div><svg class="a" style="left:29px;top:10px" width="8" height="10" viewBox="0 0 8 10"><path d="M1.5 1l4 4-4 4" fill="none" stroke="#111" stroke-width="1.9"/></svg><div class="rt mono">{<span class="k">"k8s_cluster"</span>:<span class="v">common-dev</span>,<span class="k">"total_logs"</span>:<span class="n">"195555"</span>}</div></div>
<div class="row" style="top:528.8px"><div class="bl"></div><svg class="a" style="left:29px;top:10px" width="8" height="10" viewBox="0 0 8 10"><path d="M1.5 1l4 4-4 4" fill="none" stroke="#111" stroke-width="1.9"/></svg><div class="rt mono">{<span class="k">"k8s_cluster"</span>:<span class="v">common-perf</span>,<span class="k">"total_logs"</span>:<span class="n">"92566"</span>}</div></div>
<div class="row" style="top:557.7px"><div class="bl"></div><svg class="a" style="left:29px;top:10px" width="8" height="10" viewBox="0 0 8 10"><path d="M1.5 1l4 4-4 4" fill="none" stroke="#111" stroke-width="1.9"/></svg><div class="rt mono">{<span class="k">"k8s_cluster"</span>:<span class="v">dev2</span>,<span class="k">"total_logs"</span>:<span class="n">"6302"</span>}</div></div>
<div class="row" style="top:586.6px"><div class="bl"></div><svg class="a" style="left:29px;top:10px" width="8" height="10" viewBox="0 0 8 10"><path d="M1.5 1l4 4-4 4" fill="none" stroke="#111" stroke-width="1.9"/></svg><div class="rt mono">{<span class="k">"k8s_cluster"</span>:<span class="v">dev3</span>,<span class="k">"total_logs"</span>:<span class="n">"21165"</span>}</div></div>
<div class="row" style="top:615.5px"><div class="bl"></div><svg class="a" style="left:29px;top:10px" width="8" height="10" viewBox="0 0 8 10"><path d="M1.5 1l4 4-4 4" fill="none" stroke="#111" stroke-width="1.9"/></svg><div class="rt mono">{<span class="k">"k8s_cluster"</span>:<span class="v">dev4</span>,<span class="k">"total_logs"</span>:<span class="n">"12759"</span>}</div></div>
<div class="row" style="top:644.4px"><div class="bl"></div><svg class="a" style="left:29px;top:10px" width="8" height="10" viewBox="0 0 8 10"><path d="M1.5 1l4 4-4 4" fill="none" stroke="#111" stroke-width="1.9"/></svg><div class="rt mono">{<span class="k">"k8s_cluster"</span>:<span class="v">github-runners</span>,<span class="k">"total_logs"</span>:<span class="n">"1223"</span>}</div></div>
<div class="row" style="top:673.3px"><div class="bl"></div><svg class="a" style="left:29px;top:10px" width="8" height="10" viewBox="0 0 8 10"><path d="M1.5 1l4 4-4 4" fill="none" stroke="#111" stroke-width="1.9"/></svg><div class="rt mono">{<span class="k">"k8s_cluster"</span>:<span class="v">introspection</span>,<span class="k">"total_logs"</span>:<span class="n">"68104"</span>}</div></div>
<div class="row" style="top:702.2px"><div class="bl"></div><svg class="a" style="left:29px;top:10px" width="8" height="10" viewBox="0 0 8 10"><path d="M1.5 1l4 4-4 4" fill="none" stroke="#111" stroke-width="1.9"/></svg><div class="rt mono">{<span class="k">"k8s_cluster"</span>:<span class="v">main</span>,<span class="k">"total_logs"</span>:<span class="n">"33575"</span>}</div></div>
<div class="row" style="top:731.1px"><div class="bl"></div><svg class="a" style="left:29px;top:10px" width="8" height="10" viewBox="0 0 8 10"><path d="M1.5 1l4 4-4 4" fill="none" stroke="#111" stroke-width="1.9"/></svg><div class="rt mono">{<span class="k">"k8s_cluster"</span>:<span class="v">monitor</span>,<span class="k">"total_logs"</span>:<span class="n">"175908"</span>}</div></div>
<div class="row" style="top:760.0px"><div class="bl"></div><svg class="a" style="left:29px;top:10px" width="8" height="10" viewBox="0 0 8 10"><path d="M1.5 1l4 4-4 4" fill="none" stroke="#111" stroke-width="1.9"/></svg><div class="rt mono">{<span class="k">"k8s_cluster"</span>:<span class="v">production</span>,<span class="k">"total_logs"</span>:<span class="n">"663434"</span>}</div></div>
<div class="row" style="top:788.9px"><div class="bl"></div><svg class="a" style="left:29px;top:10px" width="8" height="10" viewBox="0 0 8 10"><path d="M1.5 1l4 4-4 4" fill="none" stroke="#111" stroke-width="1.9"/></svg><div class="rt mono">{<span class="k">"k8s_cluster"</span>:<span class="v">quadrantsec</span>,<span class="k">"total_logs"</span>:<span class="n">"6452"</span>}</div></div>
<div class="row" style="top:817.8px"><div class="bl"></div><svg class="a" style="left:29px;top:10px" width="8" height="10" viewBox="0 0 8 10"><path d="M1.5 1l4 4-4 4" fill="none" stroke="#111" stroke-width="1.9"/></svg><div class="rt mono">{<span class="k">"k8s_cluster"</span>:<span class="v">radius</span>,<span class="k">"total_logs"</span>:<span class="n">"509258"</span>}</div></div>
<div class="a" style="left:487px;top:1118px;width:1511px;height:10px;border-radius:5px;background:#bcbfe6"></div>
<div class="a" style="left:0;top:1130px;width:1999px;height:1px;background:#3c5a3c"></div>
</body></html>
